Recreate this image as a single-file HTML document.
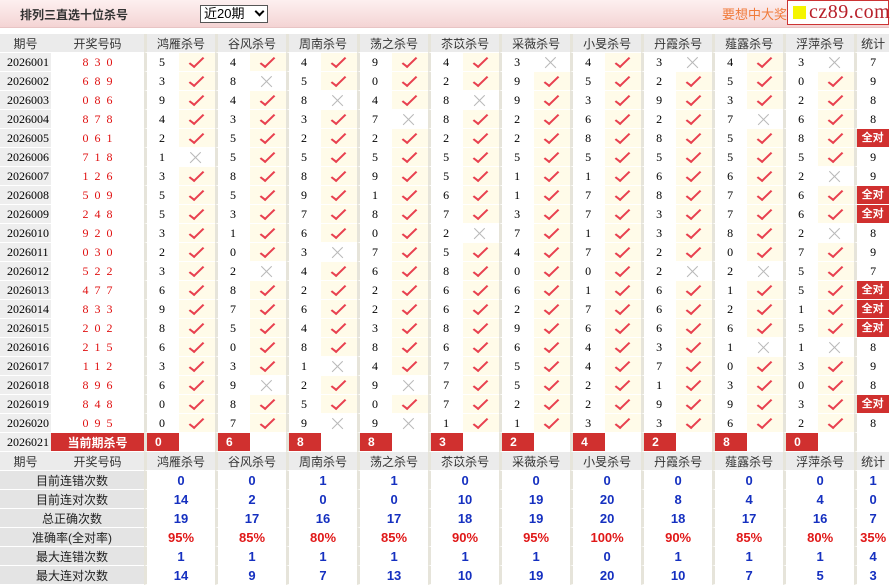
<!DOCTYPE html>
<html><head><meta charset="utf-8"><style>
body{margin:0;width:891px;height:584px;background:#fff;position:relative;overflow:hidden;font-family:"Liberation Sans","Noto Sans CJK SC",sans-serif;}
.bar{position:absolute;left:0;top:0;width:889px;height:27px;background:linear-gradient(#fdf0f0,#f4d4d4);border-bottom:1px solid #e8c4c4;}
.title{position:absolute;left:20px;top:6px;font-size:12px;font-weight:bold;color:#333;}
.sel{position:absolute;left:200px;top:5px;width:63px;height:16px;border:1px solid #555;background:#fff;font-size:13px;line-height:16px;color:#000;box-sizing:content-box;padding-left:3px}
.sel i{position:absolute;right:4px;width:5px;height:5px;border-right:2px solid #000;border-bottom:2px solid #000;transform:rotate(45deg);top:2px}
.ad{position:absolute;left:722px;top:4px;font-size:13px;color:#f07a3a;}
.logo{position:absolute;left:787px;top:0;width:100px;height:23px;border:1px solid #c33;background:#fff;}
.logo span{position:absolute;left:5px;top:5px;width:13px;height:13px;background:#f5f500}
.logo b{position:absolute;left:21px;top:0;font-family:"Liberation Serif",serif;font-weight:normal;font-size:20px;color:#b8202a;letter-spacing:.5px;line-height:23px}
table{position:absolute;left:0;top:34px;border-collapse:separate;border-spacing:0;table-layout:fixed;width:889px;font-size:12px}
td{height:19px;padding:0;box-sizing:border-box;border-bottom:1px solid #fff;text-align:center;color:#000;font-family:"Liberation Serif","Noto Serif CJK SC",serif;white-space:nowrap;overflow:hidden}
tr.h td{background:#ebebeb;font-family:"Liberation Sans","Noto Sans CJK SC",sans-serif;color:#333;}
td.q{background:#eeeeee;text-align:left;padding-left:7px}
tr.h td.q{text-align:center;padding:0}
td.k{color:#e01010;letter-spacing:6px;padding-left:6px}
td.n{border-left:3px solid #e6e4da;text-align:left;padding-left:12px}
td.g{border-left:3px solid #e6e4da}
td.y{background:#fffbe9;position:relative}
td.y:after{content:"";position:absolute;left:14px;top:1px;width:5px;height:12px;border-right:2px solid #e8404f;border-bottom:2px solid #e8404f;transform:rotate(38deg) skewX(-8deg)}
td.x{position:relative}
td.x:before,td.x:after{content:"";position:absolute;left:9px;top:9px;width:15px;height:1.3px;background:#b8b8b8;transform:rotate(45deg)}
td.x:after{transform:rotate(-45deg)}
td.t{border-left:3px solid #e6e4da}
td.t b{display:block;background:#d0302f;color:#fff;font-family:"Liberation Sans","Noto Sans CJK SC",sans-serif;font-size:11px;height:18px;line-height:18px;margin-left:-1px}
td.c{background:#d0302f;color:#fff;font-weight:bold;font-family:"Liberation Sans","Noto Sans CJK SC",sans-serif}
td.cn{border-left:3px solid #e6e4da;background:#d0302f;color:#fff;font-weight:bold;text-align:left;padding-left:8px;font-family:"Liberation Sans",sans-serif}
tr.s td{height:19px;border-bottom:1px solid #fff}
td.l{background:#e4e4e4;font-family:"Liberation Sans","Noto Sans CJK SC",sans-serif;color:#222;font-size:12px}
td.v{border-left:3px solid #e6e4da;color:#1530c0;font-weight:bold;font-size:13px;font-family:"Liberation Sans",sans-serif}
td.p{color:#e01818}
</style></head><body>
<div class="bar"></div>
<div class="title">排列三直选十位杀号</div>
<div class="sel">近20期<i></i></div>
<div class="ad">要想中大奖</div>
<div class="logo"><span></span><b>cz89.com</b></div>
<table>
<colgroup><col style="width:51px"><col style="width:93px">
<col style="width:35px"><col style="width:36px"><col style="width:35px"><col style="width:36px"><col style="width:35px"><col style="width:36px"><col style="width:35px"><col style="width:36px"><col style="width:35px"><col style="width:36px"><col style="width:35px"><col style="width:36px"><col style="width:35px"><col style="width:36px"><col style="width:35px"><col style="width:36px"><col style="width:35px"><col style="width:36px"><col style="width:35px"><col style="width:36px">
<col style="width:35px"></colgroup>
<tr class="h"><td class="q">期号</td><td>开奖号码</td><td class="g" colspan="2">鸿雁杀号</td><td class="g" colspan="2">谷风杀号</td><td class="g" colspan="2">周南杀号</td><td class="g" colspan="2">荡之杀号</td><td class="g" colspan="2">苶苡杀号</td><td class="g" colspan="2">采薇杀号</td><td class="g" colspan="2">小旻杀号</td><td class="g" colspan="2">丹霞杀号</td><td class="g" colspan="2">薤露杀号</td><td class="g" colspan="2">浮萍杀号</td><td class="g">统计</td></tr>
<tr><td class="q">2026001</td><td class="k">830</td><td class="n">5</td><td class="y"></td><td class="n">4</td><td class="y"></td><td class="n">4</td><td class="y"></td><td class="n">9</td><td class="y"></td><td class="n">4</td><td class="y"></td><td class="n">3</td><td class="x"></td><td class="n">4</td><td class="y"></td><td class="n">3</td><td class="x"></td><td class="n">4</td><td class="y"></td><td class="n">3</td><td class="x"></td><td class="t">7</td></tr>
<tr><td class="q">2026002</td><td class="k">689</td><td class="n">3</td><td class="y"></td><td class="n">8</td><td class="x"></td><td class="n">5</td><td class="y"></td><td class="n">0</td><td class="y"></td><td class="n">2</td><td class="y"></td><td class="n">9</td><td class="y"></td><td class="n">5</td><td class="y"></td><td class="n">2</td><td class="y"></td><td class="n">5</td><td class="y"></td><td class="n">0</td><td class="y"></td><td class="t">9</td></tr>
<tr><td class="q">2026003</td><td class="k">086</td><td class="n">9</td><td class="y"></td><td class="n">4</td><td class="y"></td><td class="n">8</td><td class="x"></td><td class="n">4</td><td class="y"></td><td class="n">8</td><td class="x"></td><td class="n">9</td><td class="y"></td><td class="n">3</td><td class="y"></td><td class="n">9</td><td class="y"></td><td class="n">3</td><td class="y"></td><td class="n">2</td><td class="y"></td><td class="t">8</td></tr>
<tr><td class="q">2026004</td><td class="k">878</td><td class="n">4</td><td class="y"></td><td class="n">3</td><td class="y"></td><td class="n">3</td><td class="y"></td><td class="n">7</td><td class="x"></td><td class="n">8</td><td class="y"></td><td class="n">2</td><td class="y"></td><td class="n">6</td><td class="y"></td><td class="n">2</td><td class="y"></td><td class="n">7</td><td class="x"></td><td class="n">6</td><td class="y"></td><td class="t">8</td></tr>
<tr><td class="q">2026005</td><td class="k">061</td><td class="n">2</td><td class="y"></td><td class="n">5</td><td class="y"></td><td class="n">2</td><td class="y"></td><td class="n">2</td><td class="y"></td><td class="n">2</td><td class="y"></td><td class="n">2</td><td class="y"></td><td class="n">8</td><td class="y"></td><td class="n">8</td><td class="y"></td><td class="n">5</td><td class="y"></td><td class="n">8</td><td class="y"></td><td class="t"><b>全对</b></td></tr>
<tr><td class="q">2026006</td><td class="k">718</td><td class="n">1</td><td class="x"></td><td class="n">5</td><td class="y"></td><td class="n">5</td><td class="y"></td><td class="n">5</td><td class="y"></td><td class="n">5</td><td class="y"></td><td class="n">5</td><td class="y"></td><td class="n">5</td><td class="y"></td><td class="n">5</td><td class="y"></td><td class="n">5</td><td class="y"></td><td class="n">5</td><td class="y"></td><td class="t">9</td></tr>
<tr><td class="q">2026007</td><td class="k">126</td><td class="n">3</td><td class="y"></td><td class="n">8</td><td class="y"></td><td class="n">8</td><td class="y"></td><td class="n">9</td><td class="y"></td><td class="n">5</td><td class="y"></td><td class="n">1</td><td class="y"></td><td class="n">1</td><td class="y"></td><td class="n">6</td><td class="y"></td><td class="n">6</td><td class="y"></td><td class="n">2</td><td class="x"></td><td class="t">9</td></tr>
<tr><td class="q">2026008</td><td class="k">509</td><td class="n">5</td><td class="y"></td><td class="n">5</td><td class="y"></td><td class="n">9</td><td class="y"></td><td class="n">1</td><td class="y"></td><td class="n">6</td><td class="y"></td><td class="n">1</td><td class="y"></td><td class="n">7</td><td class="y"></td><td class="n">8</td><td class="y"></td><td class="n">7</td><td class="y"></td><td class="n">6</td><td class="y"></td><td class="t"><b>全对</b></td></tr>
<tr><td class="q">2026009</td><td class="k">248</td><td class="n">5</td><td class="y"></td><td class="n">3</td><td class="y"></td><td class="n">7</td><td class="y"></td><td class="n">8</td><td class="y"></td><td class="n">7</td><td class="y"></td><td class="n">3</td><td class="y"></td><td class="n">7</td><td class="y"></td><td class="n">3</td><td class="y"></td><td class="n">7</td><td class="y"></td><td class="n">6</td><td class="y"></td><td class="t"><b>全对</b></td></tr>
<tr><td class="q">2026010</td><td class="k">920</td><td class="n">3</td><td class="y"></td><td class="n">1</td><td class="y"></td><td class="n">6</td><td class="y"></td><td class="n">0</td><td class="y"></td><td class="n">2</td><td class="x"></td><td class="n">7</td><td class="y"></td><td class="n">1</td><td class="y"></td><td class="n">3</td><td class="y"></td><td class="n">8</td><td class="y"></td><td class="n">2</td><td class="x"></td><td class="t">8</td></tr>
<tr><td class="q">2026011</td><td class="k">030</td><td class="n">2</td><td class="y"></td><td class="n">0</td><td class="y"></td><td class="n">3</td><td class="x"></td><td class="n">7</td><td class="y"></td><td class="n">5</td><td class="y"></td><td class="n">4</td><td class="y"></td><td class="n">7</td><td class="y"></td><td class="n">2</td><td class="y"></td><td class="n">0</td><td class="y"></td><td class="n">7</td><td class="y"></td><td class="t">9</td></tr>
<tr><td class="q">2026012</td><td class="k">522</td><td class="n">3</td><td class="y"></td><td class="n">2</td><td class="x"></td><td class="n">4</td><td class="y"></td><td class="n">6</td><td class="y"></td><td class="n">8</td><td class="y"></td><td class="n">0</td><td class="y"></td><td class="n">0</td><td class="y"></td><td class="n">2</td><td class="x"></td><td class="n">2</td><td class="x"></td><td class="n">5</td><td class="y"></td><td class="t">7</td></tr>
<tr><td class="q">2026013</td><td class="k">477</td><td class="n">6</td><td class="y"></td><td class="n">8</td><td class="y"></td><td class="n">2</td><td class="y"></td><td class="n">2</td><td class="y"></td><td class="n">6</td><td class="y"></td><td class="n">6</td><td class="y"></td><td class="n">1</td><td class="y"></td><td class="n">6</td><td class="y"></td><td class="n">1</td><td class="y"></td><td class="n">5</td><td class="y"></td><td class="t"><b>全对</b></td></tr>
<tr><td class="q">2026014</td><td class="k">833</td><td class="n">9</td><td class="y"></td><td class="n">7</td><td class="y"></td><td class="n">6</td><td class="y"></td><td class="n">2</td><td class="y"></td><td class="n">6</td><td class="y"></td><td class="n">2</td><td class="y"></td><td class="n">7</td><td class="y"></td><td class="n">6</td><td class="y"></td><td class="n">2</td><td class="y"></td><td class="n">1</td><td class="y"></td><td class="t"><b>全对</b></td></tr>
<tr><td class="q">2026015</td><td class="k">202</td><td class="n">8</td><td class="y"></td><td class="n">5</td><td class="y"></td><td class="n">4</td><td class="y"></td><td class="n">3</td><td class="y"></td><td class="n">8</td><td class="y"></td><td class="n">9</td><td class="y"></td><td class="n">6</td><td class="y"></td><td class="n">6</td><td class="y"></td><td class="n">6</td><td class="y"></td><td class="n">5</td><td class="y"></td><td class="t"><b>全对</b></td></tr>
<tr><td class="q">2026016</td><td class="k">215</td><td class="n">6</td><td class="y"></td><td class="n">0</td><td class="y"></td><td class="n">8</td><td class="y"></td><td class="n">8</td><td class="y"></td><td class="n">6</td><td class="y"></td><td class="n">6</td><td class="y"></td><td class="n">4</td><td class="y"></td><td class="n">3</td><td class="y"></td><td class="n">1</td><td class="x"></td><td class="n">1</td><td class="x"></td><td class="t">8</td></tr>
<tr><td class="q">2026017</td><td class="k">112</td><td class="n">3</td><td class="y"></td><td class="n">3</td><td class="y"></td><td class="n">1</td><td class="x"></td><td class="n">4</td><td class="y"></td><td class="n">7</td><td class="y"></td><td class="n">5</td><td class="y"></td><td class="n">4</td><td class="y"></td><td class="n">7</td><td class="y"></td><td class="n">0</td><td class="y"></td><td class="n">3</td><td class="y"></td><td class="t">9</td></tr>
<tr><td class="q">2026018</td><td class="k">896</td><td class="n">6</td><td class="y"></td><td class="n">9</td><td class="x"></td><td class="n">2</td><td class="y"></td><td class="n">9</td><td class="x"></td><td class="n">7</td><td class="y"></td><td class="n">5</td><td class="y"></td><td class="n">2</td><td class="y"></td><td class="n">1</td><td class="y"></td><td class="n">3</td><td class="y"></td><td class="n">0</td><td class="y"></td><td class="t">8</td></tr>
<tr><td class="q">2026019</td><td class="k">848</td><td class="n">0</td><td class="y"></td><td class="n">8</td><td class="y"></td><td class="n">5</td><td class="y"></td><td class="n">0</td><td class="y"></td><td class="n">7</td><td class="y"></td><td class="n">2</td><td class="y"></td><td class="n">2</td><td class="y"></td><td class="n">9</td><td class="y"></td><td class="n">9</td><td class="y"></td><td class="n">3</td><td class="y"></td><td class="t"><b>全对</b></td></tr>
<tr><td class="q">2026020</td><td class="k">095</td><td class="n">0</td><td class="y"></td><td class="n">7</td><td class="y"></td><td class="n">9</td><td class="x"></td><td class="n">9</td><td class="x"></td><td class="n">1</td><td class="y"></td><td class="n">1</td><td class="y"></td><td class="n">3</td><td class="y"></td><td class="n">3</td><td class="y"></td><td class="n">6</td><td class="y"></td><td class="n">2</td><td class="y"></td><td class="t">8</td></tr>
<tr><td class="q">2026021</td><td class="c">当前期杀号</td><td class="cn">0</td><td></td><td class="cn">6</td><td></td><td class="cn">8</td><td></td><td class="cn">8</td><td></td><td class="cn">3</td><td></td><td class="cn">2</td><td></td><td class="cn">4</td><td></td><td class="cn">2</td><td></td><td class="cn">8</td><td></td><td class="cn">0</td><td></td><td class="g"></td></tr>
<tr class="h"><td class="q">期号</td><td>开奖号码</td><td class="g" colspan="2">鸿雁杀号</td><td class="g" colspan="2">谷风杀号</td><td class="g" colspan="2">周南杀号</td><td class="g" colspan="2">荡之杀号</td><td class="g" colspan="2">苶苡杀号</td><td class="g" colspan="2">采薇杀号</td><td class="g" colspan="2">小旻杀号</td><td class="g" colspan="2">丹霞杀号</td><td class="g" colspan="2">薤露杀号</td><td class="g" colspan="2">浮萍杀号</td><td class="g">统计</td></tr>
<tr class="s"><td class="l" colspan="2">目前连错次数</td><td class="v" colspan="2">0</td><td class="v" colspan="2">0</td><td class="v" colspan="2">1</td><td class="v" colspan="2">1</td><td class="v" colspan="2">0</td><td class="v" colspan="2">0</td><td class="v" colspan="2">0</td><td class="v" colspan="2">0</td><td class="v" colspan="2">0</td><td class="v" colspan="2">0</td><td class="v">1</td></tr>
<tr class="s"><td class="l" colspan="2">目前连对次数</td><td class="v" colspan="2">14</td><td class="v" colspan="2">2</td><td class="v" colspan="2">0</td><td class="v" colspan="2">0</td><td class="v" colspan="2">10</td><td class="v" colspan="2">19</td><td class="v" colspan="2">20</td><td class="v" colspan="2">8</td><td class="v" colspan="2">4</td><td class="v" colspan="2">4</td><td class="v">0</td></tr>
<tr class="s"><td class="l" colspan="2">总正确次数</td><td class="v" colspan="2">19</td><td class="v" colspan="2">17</td><td class="v" colspan="2">16</td><td class="v" colspan="2">17</td><td class="v" colspan="2">18</td><td class="v" colspan="2">19</td><td class="v" colspan="2">20</td><td class="v" colspan="2">18</td><td class="v" colspan="2">17</td><td class="v" colspan="2">16</td><td class="v">7</td></tr>
<tr class="s"><td class="l" colspan="2">准确率(全对率)</td><td class="v p" colspan="2">95%</td><td class="v p" colspan="2">85%</td><td class="v p" colspan="2">80%</td><td class="v p" colspan="2">85%</td><td class="v p" colspan="2">90%</td><td class="v p" colspan="2">95%</td><td class="v p" colspan="2">100%</td><td class="v p" colspan="2">90%</td><td class="v p" colspan="2">85%</td><td class="v p" colspan="2">80%</td><td class="v p">35%</td></tr>
<tr class="s"><td class="l" colspan="2">最大连错次数</td><td class="v" colspan="2">1</td><td class="v" colspan="2">1</td><td class="v" colspan="2">1</td><td class="v" colspan="2">1</td><td class="v" colspan="2">1</td><td class="v" colspan="2">1</td><td class="v" colspan="2">0</td><td class="v" colspan="2">1</td><td class="v" colspan="2">1</td><td class="v" colspan="2">1</td><td class="v">4</td></tr>
<tr class="s"><td class="l" colspan="2">最大连对次数</td><td class="v" colspan="2">14</td><td class="v" colspan="2">9</td><td class="v" colspan="2">7</td><td class="v" colspan="2">13</td><td class="v" colspan="2">10</td><td class="v" colspan="2">19</td><td class="v" colspan="2">20</td><td class="v" colspan="2">10</td><td class="v" colspan="2">7</td><td class="v" colspan="2">5</td><td class="v">3</td></tr>
</table>
</body></html>
